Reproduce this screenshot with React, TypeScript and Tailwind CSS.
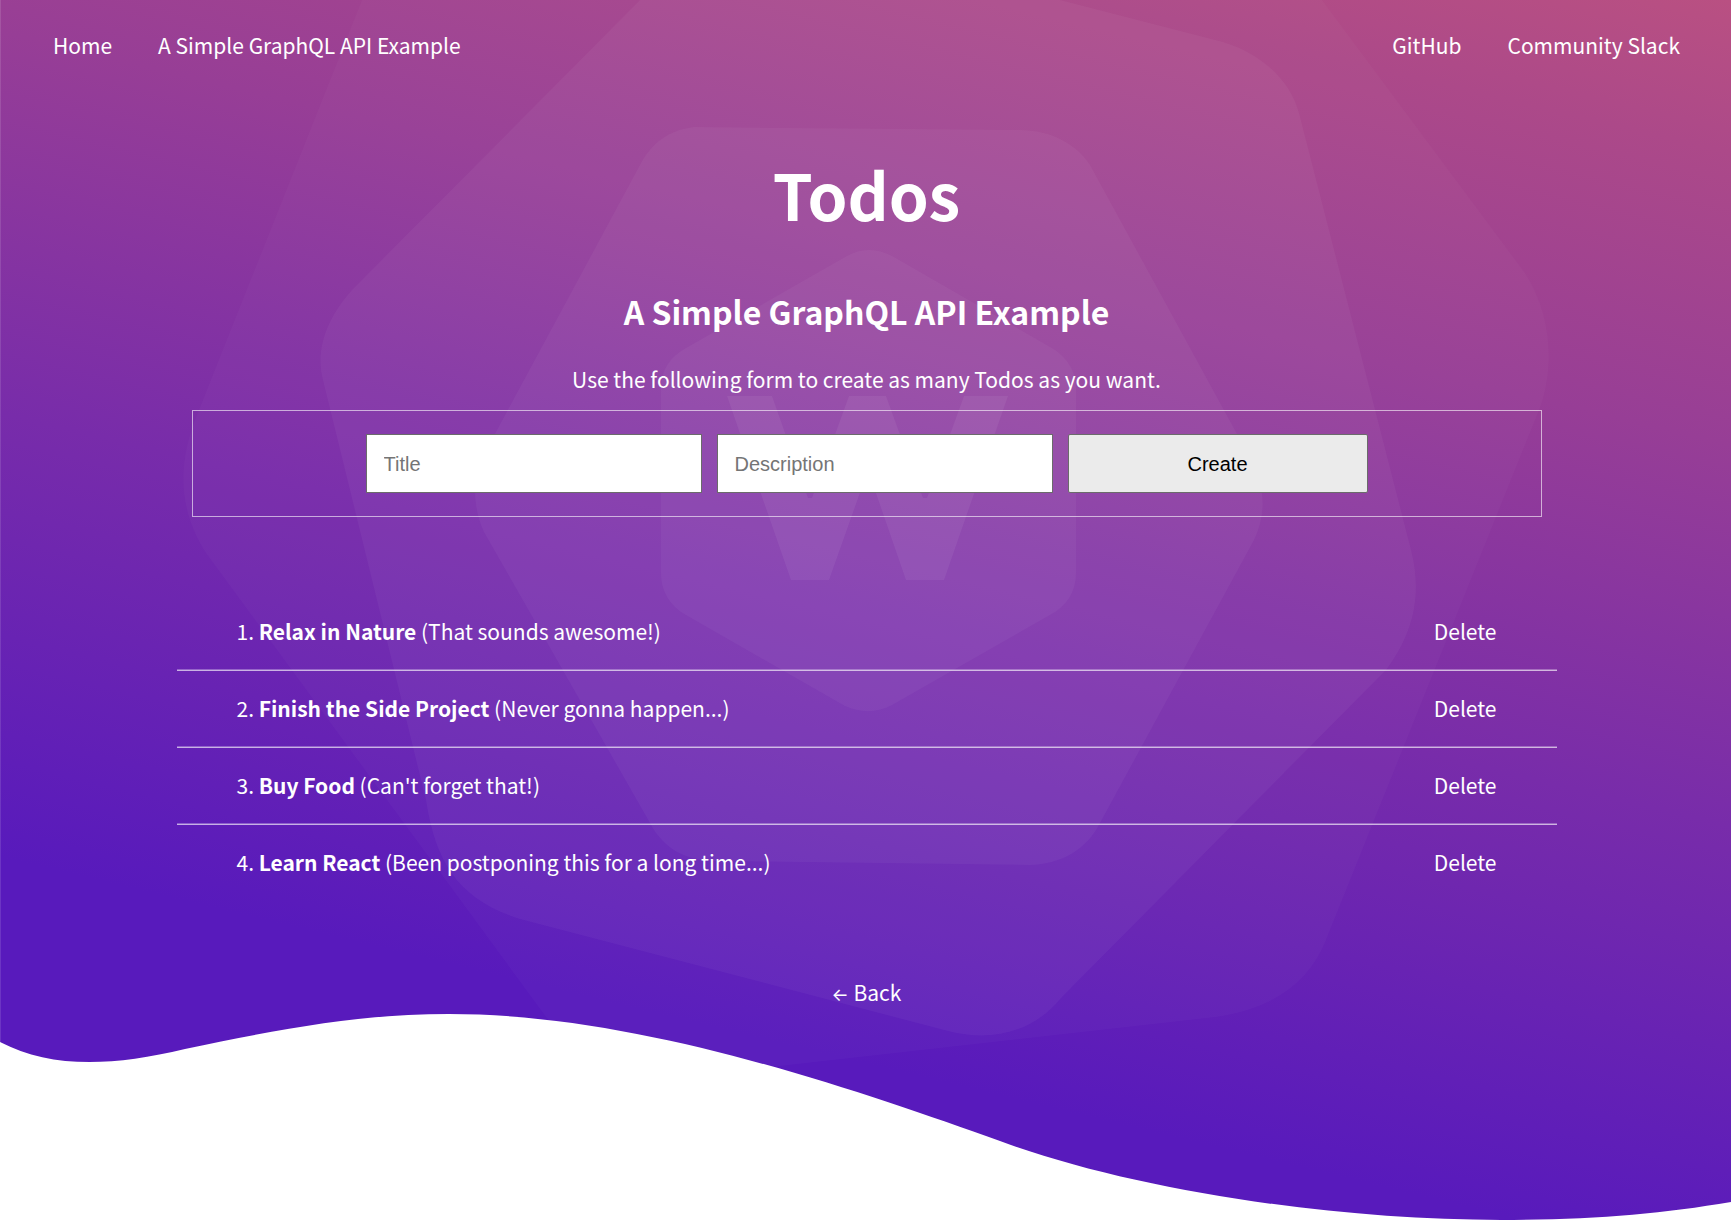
import React, { useState } from "react";

type Todo = { id: number; title: string; description: string };

const initialTodos: Todo[] = [
  { id: 1, title: "Relax in Nature", description: "That sounds awesome!" },
  { id: 2, title: "Finish the Side Project", description: "Never gonna happen..." },
  { id: 3, title: "Buy Food", description: "Can't forget that!" },
  { id: 4, title: "Learn React", description: "Been postponing this for a long time..." },
];

function Backdrop() {
  return (
    <svg
      aria-hidden="true"
      viewBox="0 0 1731 1225"
      preserveAspectRatio="none"
      className="absolute inset-0 -z-10 h-full w-full"
    >
      <defs>
        <linearGradient id="sky" gradientUnits="userSpaceOnUse" x1="1731" y1="0" x2="1444" y2="1202">
          <stop offset="0" stopColor="#b95082" />
          <stop offset="0.12" stopColor="#ac4989" />
          <stop offset="0.35" stopColor="#973e96" />
          <stop offset="0.65" stopColor="#782caa" />
          <stop offset="1" stopColor="#581abc" />
        </linearGradient>
      </defs>
      <rect width="1731" height="1225" fill="url(#sky)" />
      <rect width="1" height="1225" fill="#fff" fillOpacity="0.12" />
      <g fill="#fff">
        <path
          fillOpacity="0.025"
          d="M362 0 L197 415 C178 462 177 508 206 553 L546 1017 C590 1075 630 1084 700 1075 L1216 1017 C1270 1009 1310 985 1328 935 L1541 405 C1554 365 1552 315 1525 273 L1322 0 Z"
        />
        <path
          fillOpacity="0.04"
          d="M640 0 L352 290 C327 318 315 350 323 380 L426 800 C436 865 460 900 520 919 L948 1031 C995 1043 1035 1030 1061 998 L1386 670 C1412 635 1423 597 1411 550 L1299 113 C1290 80 1262 54 1223 42 L1060 0 Z"
        />
        <path
          fillOpacity="0.04"
          d="M694 127 C668 130 651 144 640 165 L482 458 C472 480 473 508 484 532 L650 823 C664 850 688 861 715 861 L1030 865 C1062 864 1087 849 1100 823 L1254 540 C1265 517 1266 493 1254 465 L1090 165 C1077 145 1052 130 1019 130 Z"
        />
        <path
          fillOpacity="0.04"
          d="M847 256 C861 248 877 248 892 256 L1050 347 C1066 356 1076 370 1076 388 V573 C1076 592 1067 606 1050 615 L892 705 C877 713 861 713 845 706 L686 615 C670 606 661 592 661 573 V388 C661 370 670 357 686 348 Z"
        />
        <path
          fillOpacity="0.06"
          d="M727 396 L791 580 H829 L868 470 L906 580 H944 L1008 396 H964 L927 498 H923 L886 396 H849 L812 498 H808 L772 396 Z"
        />
      </g>
      <path
        fill="#fff"
        d="M0 1042 C50 1068 110 1067 185 1049 C280 1029 360 1014 449 1014 C640 1014 850 1088 1000 1141 C1130 1189 1330 1220 1501 1220 C1590 1220 1660 1214 1731 1202 V1225 H0 Z"
      />
    </svg>
  );
}

export default function App() {
  const [todos, setTodos] = useState(initialTodos);
  const [title, setTitle] = useState("");
  const [description, setDescription] = useState("");

  const create = (e: React.FormEvent) => {
    e.preventDefault();
    if (!title) return;
    setTodos([...todos, { id: Date.now(), title, description }]);
    setTitle("");
    setDescription("");
  };

  return (
    <div className="relative isolate min-h-screen pl-0.5 font-['Noto_Sans_CJK_SC',sans-serif] text-[21px] leading-[31px] text-white">
      <Backdrop />
      <nav className="flex justify-between px-[51px] pt-[30px]">
        <div className="flex gap-[46px]">
          <a href="#home">Home</a>
          <a href="#example">A Simple GraphQL API Example</a>
        </div>
        <div className="flex gap-[46px]">
          <a href="#github">GitHub</a>
          <a href="#slack">Community Slack</a>
        </div>
      </nav>
      <main className="mx-auto flex w-full max-w-[1380px] flex-col">
        <h1 className="mt-[92px] text-center text-[64px] leading-20 font-bold">Todos</h1>
        <h2 className="mt-[58px] text-center text-[32px] leading-10 font-bold">
          A Simple GraphQL API Example
        </h2>
        <p className="mt-[33px] text-center">Use the following form to create as many Todos as you want.</p>
        <form
          onSubmit={create}
          className="mx-[15px] mt-[15px] flex justify-center gap-[15px] border border-white/60 py-[23px] font-['Liberation_Sans',sans-serif] text-xl leading-6"
        >
          <input
            aria-label="Title"
            placeholder="Title"
            value={title}
            onChange={(e) => setTitle(e.target.value)}
            className="h-[59px] w-[336px] border border-[#6b6b6b] bg-white px-[17px] pt-0.5 text-black placeholder:text-[#757575]"
          />
          <input
            aria-label="Description"
            placeholder="Description"
            value={description}
            onChange={(e) => setDescription(e.target.value)}
            className="h-[59px] w-[336px] border border-[#6b6b6b] bg-white px-[17px] pt-0.5 text-black placeholder:text-[#757575]"
          />
          <button
            type="submit"
            className="h-[59px] w-[300px] rounded-xs border border-[#6b6b6b] bg-[#ebebeb] text-black"
          >
            Create
          </button>
        </form>
        <ol className="mt-[77px]">
          {todos.map((todo, i) => (
            <li key={todo.id}>
              {i > 0 && <hr className="border-t border-b border-t-white/30 border-b-white/65" />}
              <div className="flex justify-between px-[60px] py-[22px]">
                <span>
                  {i + 1}. <strong className="font-bold">{todo.title}</strong> ({todo.description})
                </span>
                <button type="button" onClick={() => setTodos(todos.filter((t) => t.id !== todo.id))}>
                  Delete
                </button>
              </div>
            </li>
          ))}
        </ol>
        <a href="#back" className="mt-[77px] self-center">
          <span className="font-['Inter',sans-serif] text-lg leading-6">←</span> Back
        </a>
      </main>
    </div>
  );
}
